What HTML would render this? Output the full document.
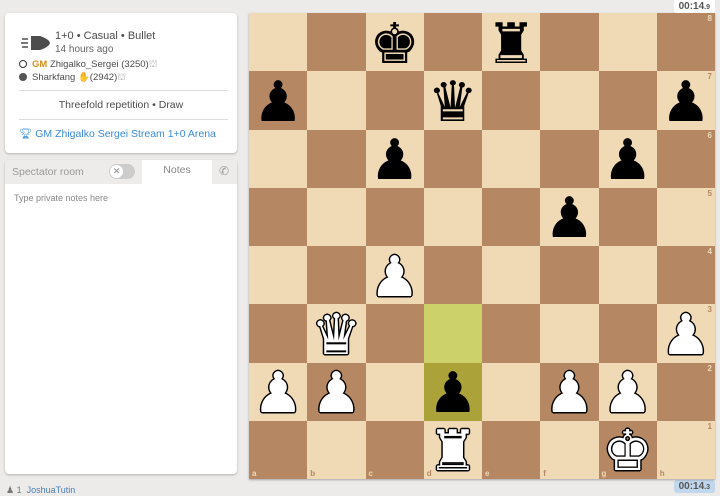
<!DOCTYPE html>
<html><head><style>
*{margin:0;padding:0;box-sizing:border-box}
body{width:720px;height:496px;background:#edebe9;font-family:"Liberation Sans","DejaVu Sans",sans-serif;position:relative;overflow:hidden;color:#4d4d4d}
.box{position:absolute;background:#fff;border-radius:4px;box-shadow:0 1px 2px rgba(0,0,0,.25)}
#board{position:absolute;left:249px;top:13px;width:466px;height:466px;display:grid;grid-template-columns:repeat(8,58.25px);grid-template-rows:repeat(8,58.25px);box-shadow:0 1px 2px rgba(0,0,0,.3);overflow:hidden}
.sq{position:relative;display:flex;align-items:center;justify-content:center;font-family:"DejaVu Sans",sans-serif;font-size:56px;line-height:1;padding-top:5px;overflow:hidden;min-height:0}
.l{background:#f0d9b5}.d{background:#b58863}
.b{color:#000}
.w{color:#fff;text-shadow:1.5px 0 0 #000,-1.5px 0 0 #000,0 1.5px 0 #000,0 -1.5px 0 #000,1px 1px 0 #000,-1px 1px 0 #000,1px -1px 0 #000,-1px -1px 0 #000}
.co{position:absolute;font-size:8px;font-family:"Liberation Sans",sans-serif;font-weight:bold;text-shadow:none}
.l .co{color:#b58863}.d .co{color:#f0d9b5}
.rk{top:2px;right:3px}.fl{bottom:1px;left:3px}
.clk{position:absolute;right:5px;height:13px;padding:0 5px;font-size:10px;font-weight:bold;color:#555;line-height:13px;border-radius:0 0 3px 3px}
</style></head><body>
<div class="clk" style="top:0;background:#fff">00:14<span style="font-size:7px">.9</span></div>
<div class="clk" style="top:480px;background:#c1d7ed;border-radius:3px">00:14<span style="font-size:7px">.3</span></div>

<div class="box" style="left:5px;top:13px;width:232px;height:140px">
 <svg style="position:absolute;left:14px;top:21px" width="32" height="18" viewBox="0 0 32 18"><path d="M12 2 H21 Q30 5 31 9 Q30 13 21 16 H12 Z" fill="#4d4d4d"/><path d="M3 5h6M2 9h7M3 13h6" stroke="#4d4d4d" stroke-width="1.6"/></svg>
 <div style="position:absolute;left:50px;top:17px;font-size:11px;color:#4d4d4d">1+0 • Casual • Bullet</div>
 <div style="position:absolute;left:50px;top:31px;font-size:10px;color:#666">14 hours ago</div>
 <div style="position:absolute;left:14px;top:46px;font-size:9.5px;color:#4d4d4d;line-height:12.5px">
  <div><span style="display:inline-block;width:8px;height:8px;border:1.3px solid #333;border-radius:50%;margin-right:5px;vertical-align:-1px"></span><b style="color:#d59020">GM</b> Zhigalko_Sergei (3250)<span style="color:#aaa">⛫</span></div>
  <div><span style="display:inline-block;width:8px;height:8px;background:#555;border-radius:50%;margin-right:5px;vertical-align:-1px"></span>Sharkfang <span style="color:#f0c060">✋</span>(2942)<span style="color:#aaa">⛫</span></div>
 </div>
 <div style="position:absolute;left:14px;top:77px;width:209px;border-top:1px solid #ddd"></div>
 <div style="position:absolute;left:0;top:86px;width:232px;text-align:center;font-size:10.5px;color:#4d4d4d">Threefold repetition • Draw</div>
 <div style="position:absolute;left:14px;top:106px;width:209px;border-top:1px solid #ddd"></div>
 <div style="position:absolute;left:14px;top:114px;font-size:10.5px;color:#3a8bd4"><span>🏆︎</span> GM Zhigalko Sergei Stream 1+0 Arena</div>
</div>

<div class="box" style="left:5px;top:160px;width:232px;height:314px">
 <div style="position:absolute;left:0;top:0;width:232px;height:24px;background:#eeeceb;border-radius:4px 4px 0 0"></div>
 <div style="position:absolute;left:7px;top:6px;font-size:10.5px;color:#999">Spectator room</div>
 <div style="position:absolute;left:104px;top:4px;width:26px;height:15px;border-radius:8px;background:#ccc"><div style="position:absolute;left:1px;top:1px;width:13px;height:13px;border-radius:50%;background:#fff;font-size:9px;text-align:center;line-height:13px;color:#888">✕</div></div>
 <div style="position:absolute;left:137px;top:0;width:70px;height:24px;background:#fff;text-align:center;font-size:10.5px;line-height:20px;color:#888">Notes</div>
 <div style="position:absolute;left:214px;top:4px;font-size:12px;color:#999">✆</div>
 <div style="position:absolute;left:9px;top:33px;font-size:9px;color:#888">Type private notes here</div>
</div>
<div style="position:absolute;left:6px;top:485px;font-size:9px;color:#777">&#9823; 1 &nbsp;<span style="color:#4a7fb5">JoshuaTutin</span></div>

<div id="board">
<div class="sq l"></div><div class="sq d"></div><div class="sq l b">♚</div><div class="sq d"></div><div class="sq l b">♜</div><div class="sq d"></div><div class="sq l"></div><div class="sq d"><span class="co rk">8</span></div>
<div class="sq d b">♟</div><div class="sq l"></div><div class="sq d"></div><div class="sq l b">♛</div><div class="sq d"></div><div class="sq l"></div><div class="sq d"></div><div class="sq l b">♟<span class="co rk">7</span></div>
<div class="sq l"></div><div class="sq d"></div><div class="sq l b">♟</div><div class="sq d"></div><div class="sq l"></div><div class="sq d"></div><div class="sq l b">♟</div><div class="sq d"><span class="co rk">6</span></div>
<div class="sq d"></div><div class="sq l"></div><div class="sq d"></div><div class="sq l"></div><div class="sq d"></div><div class="sq l b">♟</div><div class="sq d"></div><div class="sq l"><span class="co rk">5</span></div>
<div class="sq l"></div><div class="sq d"></div><div class="sq l w">♟</div><div class="sq d"></div><div class="sq l"></div><div class="sq d"></div><div class="sq l"></div><div class="sq d"><span class="co rk">4</span></div>
<div class="sq d"></div><div class="sq l w">♛</div><div class="sq d"></div><div class="sq l" style="background:#cdd16a"></div><div class="sq d"></div><div class="sq l"></div><div class="sq d"></div><div class="sq l w">♟<span class="co rk">3</span></div>
<div class="sq l w">♟</div><div class="sq d w">♟</div><div class="sq l"></div><div class="sq d b" style="background:#aba23a">♟</div><div class="sq l"></div><div class="sq d w">♟</div><div class="sq l w">♟</div><div class="sq d"><span class="co rk">2</span></div>
<div class="sq d"><span class="co fl">a</span></div><div class="sq l"><span class="co fl">b</span></div><div class="sq d"><span class="co fl">c</span></div><div class="sq l w">♜<span class="co fl">d</span></div><div class="sq d"><span class="co fl">e</span></div><div class="sq l"><span class="co fl">f</span></div><div class="sq d w">♚<span class="co fl">g</span></div><div class="sq l"><span class="co rk">1</span><span class="co fl">h</span></div>
</div>
</body></html>
